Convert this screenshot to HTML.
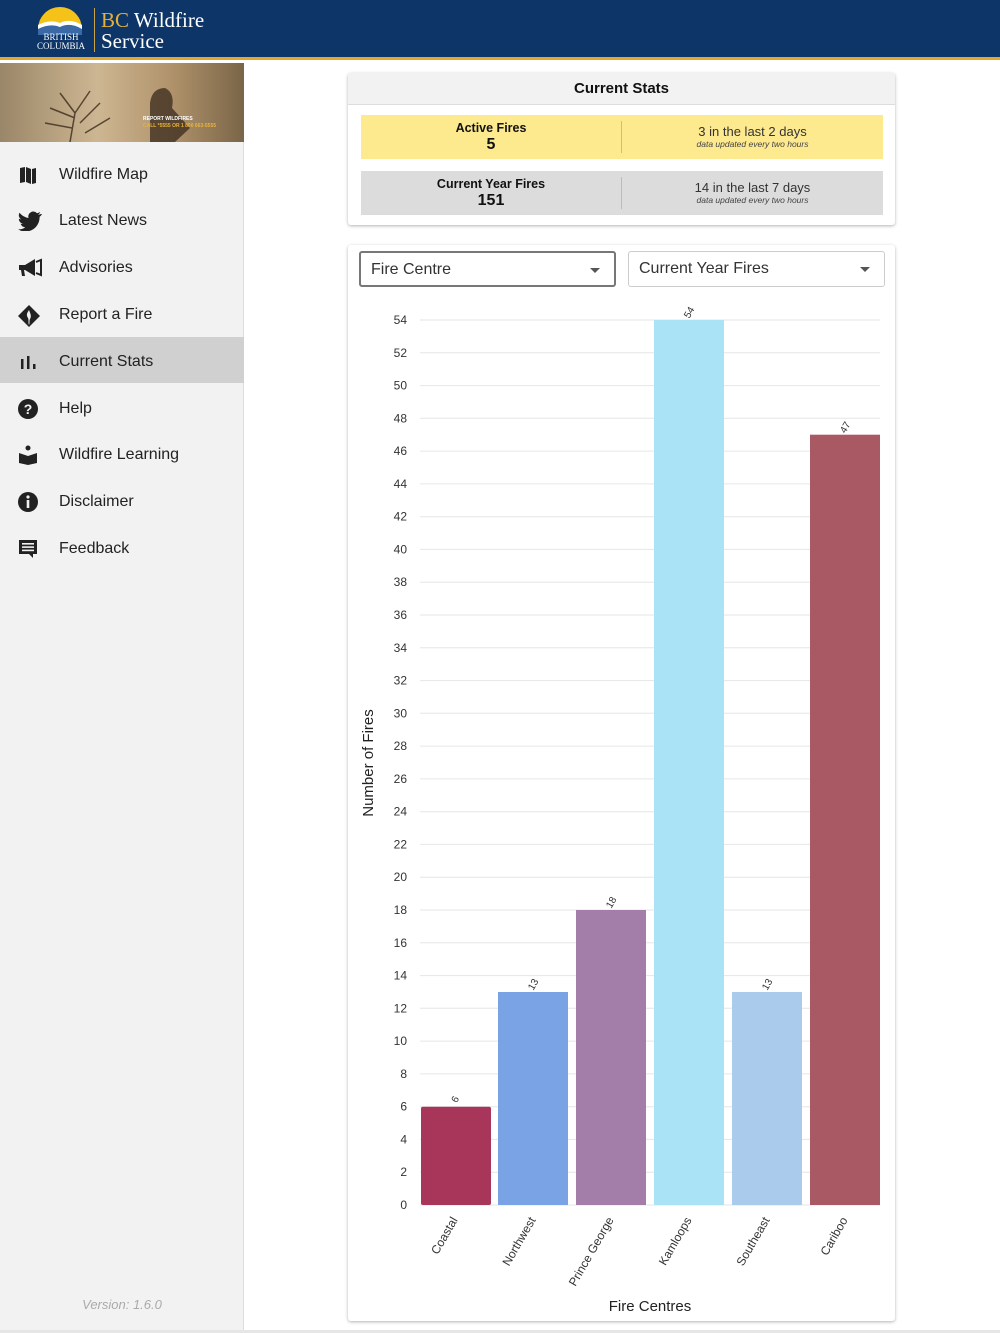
<!DOCTYPE html>
<html><head><meta charset="utf-8"><style>
*{margin:0;padding:0;box-sizing:border-box}
body{width:1000px;height:1333px;position:relative;background:#fff;font-family:"Liberation Sans",sans-serif;overflow:hidden}
.hdr{position:absolute;left:0;top:0;width:1000px;height:60px;background:#0d3568;border-bottom:3px solid #e3a82b}
.side{position:absolute;left:0;top:63px;width:244px;height:1270px;background:#f2f2f2;border-right:1px solid #ddd}
.photo{position:absolute;left:0;top:63px;width:244px;height:79px;background:linear-gradient(90deg,#9a8668,#cdb692 40%,#b0936b 70%,#7a6548);overflow:hidden}
.item{position:absolute;left:0;width:244px;height:46px;font-size:16px;color:#222;line-height:46px;padding-left:59px}
.item svg{position:absolute;left:18px;top:13px}
.sel{background:#d0d0d0}
.card{position:absolute;background:#fff;box-shadow:0 1px 3px rgba(0,0,0,.3);border-radius:3px}
.row{position:absolute;left:13px;width:522px;height:44px}
.row .l{position:absolute;left:0;width:260px;top:6px;text-align:center;font-weight:bold;font-size:12.5px;color:#111}
.row .l b{display:block;font-size:16px;margin-top:1px}
.row .r{position:absolute;left:261px;width:261px;top:9px;text-align:center;font-size:13px;color:#333}
.row .r i{display:block;font-size:8.5px;color:#444}
.row .div{position:absolute;left:260px;top:6px;height:32px;border-left:1px solid #bbb}
.sel2{position:absolute;height:36px;border:1px solid #ccc;border-radius:3px;font-size:16px;color:#333;line-height:34px;padding-left:10px}
.sel2:after{content:"";position:absolute;right:14px;top:15px;border:5px solid transparent;border-top-color:#555;border-bottom:0}
</style></head><body>
<div class="hdr">
<svg width="60" height="30" style="position:absolute;left:32px;top:5px" viewBox="0 0 60 30">
<path d="M6 24 A22 22 0 0 1 50 24Z" fill="#f5c21a"/>
<path d="M6 20 Q18 14 28 18 Q38 13 50 20 L50 28 L6 28Z" fill="#fff"/>
<path d="M6 24 Q18 18 28 22 Q38 17 50 24 L50 30 L6 30Z" fill="#3a69a6"/>
</svg>
<div style="position:absolute;left:34px;top:33px;color:#fff;font-family:'Liberation Serif',serif;font-size:9px;line-height:9px;text-align:center;width:54px">BRITISH<br>COLUMBIA</div>
<div style="position:absolute;left:94px;top:8px;height:44px;border-left:1px solid #c9a34a"></div>
<div style="position:absolute;left:101px;top:10px;font-family:'Liberation Serif',serif;font-size:21px;line-height:21px;color:#fff"><span style="color:#e3b13a">BC</span> Wildfire<br>Service</div>
</div>
<div class="side"></div>
<div class="photo">
<svg width="244" height="79" style="position:absolute;left:0;top:0">
<g stroke="#3a2a1c" stroke-width="1.5" fill="none" opacity=".8">
<path d="M70 79 L75 50 L60 30 M75 50 L90 28 M75 55 L50 45 M80 60 L100 40 M72 65 L45 60 M85 70 L110 55"/>
</g>
<path d="M150 40 Q152 25 165 25 Q175 30 172 45 L190 65 L175 79 L150 79 Z" fill="#3a2a1c" opacity=".75"/>
</svg>
<div style="position:absolute;left:143px;top:53px;font-size:5px;color:#fff;font-weight:bold">REPORT WILDFIRES</div>
<div style="position:absolute;left:143px;top:60px;font-size:5px;color:#e9b43a;font-weight:bold">CALL *5555 OR 1 800 663-5555</div>
</div>
<div class="item" style="top:152px"><svg width="20" height="20" viewBox="0 0 20 20"><path d="M2 3l5 -1v15l-5 1zM8 2l5 2v15l-5-2zM14 4l4-1v15l-4 1z" fill="#222"/></svg>Wildfire Map</div>
<div class="item" style="top:198px"><svg width="24" height="20" viewBox="0 0 24 20"><path d="M23 3c-1 .4-2 .6-3 .7 1-.6 2-1.6 2.2-2.7-1 .6-2 1-3.2 1.2A5 5 0 0 0 10.5 7 14 14 0 0 1 1.5 1.8a5 5 0 0 0 1.5 6.6 5 5 0 0 1-2.2-.6 5 5 0 0 0 4 4.9 5 5 0 0 1-2.2.1 5 5 0 0 0 4.6 3.4A10 10 0 0 1 0 18.3 14 14 0 0 0 7.5 20.5C16.6 20.5 21.6 13 21.6 6.4v-.6c1-.7 1.8-1.6 2.4-2.7z" fill="#222"/></svg>Latest News</div>
<div class="item" style="top:245px"><svg width="24" height="20" viewBox="0 0 24 20"><path d="M1 7h6l10-6v17l-10-6h-1l1 6h-3l-1-6h-2z" fill="#222"/><path d="M18 4l5-2v15l-5-2" fill="none" stroke="#222" stroke-width="2"/></svg>Advisories</div>
<div class="item" style="top:292px"><svg width="22" height="22" viewBox="0 0 22 22"><path d="M11 0l11 11-11 11L0 11z" fill="#222"/><path d="M11 5c-2 3-3 5-1 8 1 2 0 5 1 7 1-2 0-4 1-6 2-3 0-6-1-9z" fill="#f2f2f2"/></svg>Report a Fire</div>
<div class="item sel" style="top:337px;line-height:50px"><svg width="20" height="20" viewBox="0 0 20 20" style="top:15px"><rect x="3" y="7" width="2.5" height="10" fill="#222"/><rect x="9" y="4" width="2.5" height="13" fill="#222"/><rect x="15" y="12" width="2.5" height="5" fill="#222"/></svg>Current Stats</div>
<div class="item" style="top:386px"><svg width="20" height="20" viewBox="0 0 20 20"><circle cx="10" cy="10" r="10" fill="#222"/><text x="10" y="15" font-size="14" font-weight="bold" text-anchor="middle" fill="#f2f2f2" font-family="Liberation Sans">?</text></svg>Help</div>
<div class="item" style="top:432px"><svg width="20" height="20" viewBox="0 0 20 20"><circle cx="10" cy="3" r="2.5" fill="#222"/><path d="M1 8l9 3 9-3v10l-9 2-9-2z" fill="#222"/></svg>Wildfire Learning</div>
<div class="item" style="top:479px"><svg width="20" height="20" viewBox="0 0 20 20"><circle cx="10" cy="10" r="10" fill="#222"/><rect x="8.7" y="8" width="2.6" height="8" fill="#f2f2f2"/><circle cx="10" cy="5" r="1.6" fill="#f2f2f2"/></svg>Disclaimer</div>
<div class="item" style="top:526px"><svg width="20" height="20" viewBox="0 0 20 20"><path d="M1 1h18v14h-4v4l-4-4H1z" fill="#222"/><rect x="4" y="4" width="12" height="1.6" fill="#f2f2f2"/><rect x="4" y="7.3" width="12" height="1.6" fill="#f2f2f2"/><rect x="4" y="10.6" width="12" height="1.6" fill="#f2f2f2"/></svg>Feedback</div>
<div style="position:absolute;left:0;width:244px;top:1297px;text-align:center;font-size:13px;font-style:italic;color:#aaa">Version: 1.6.0</div>
<div style="position:absolute;left:0;top:1330px;width:1000px;height:3px;background:#e6e6e6"></div>

<div class="card" style="left:348px;top:73px;width:547px;height:152px">
<div style="height:32px;background:#f2f2f2;border-bottom:1px solid #ddd;text-align:center;line-height:32px;font-weight:bold;font-size:15px;color:#111">Current Stats</div>
<div class="row" style="top:42px;background:#fde98e"><div class="l">Active Fires<b>5</b></div><div class="div"></div><div class="r">3 in the last 2 days<i>data updated every two hours</i></div></div>
<div class="row" style="top:98px;background:#dcdcdc"><div class="l">Current Year Fires<b>151</b></div><div class="div"></div><div class="r">14 in the last 7 days<i>data updated every two hours</i></div></div>
</div>
<div class="card" style="left:348px;top:245px;width:547px;height:1076px"></div>
<div class="sel2" style="left:359px;top:251px;width:257px;border:2px solid #777">Fire Centre</div>
<div class="sel2" style="left:628px;top:251px;width:257px">Current Year Fires</div>

<svg width="1000" height="1333" style="position:absolute;left:0;top:0" font-family="Liberation Sans" >
<g stroke="#e6e6e6" stroke-width="1">
<line x1="420" x2="880" y1="1205" y2="1205"/><line x1="420" x2="880" y1="1172.2" y2="1172.2"/><line x1="420" x2="880" y1="1139.4" y2="1139.4"/><line x1="420" x2="880" y1="1106.7" y2="1106.7"/><line x1="420" x2="880" y1="1073.9" y2="1073.9"/><line x1="420" x2="880" y1="1041.1" y2="1041.1"/><line x1="420" x2="880" y1="1008.3" y2="1008.3"/><line x1="420" x2="880" y1="975.6" y2="975.6"/><line x1="420" x2="880" y1="942.8" y2="942.8"/><line x1="420" x2="880" y1="910" y2="910"/><line x1="420" x2="880" y1="877.2" y2="877.2"/><line x1="420" x2="880" y1="844.4" y2="844.4"/><line x1="420" x2="880" y1="811.7" y2="811.7"/><line x1="420" x2="880" y1="778.9" y2="778.9"/><line x1="420" x2="880" y1="746.1" y2="746.1"/><line x1="420" x2="880" y1="713.3" y2="713.3"/><line x1="420" x2="880" y1="680.6" y2="680.6"/><line x1="420" x2="880" y1="647.8" y2="647.8"/><line x1="420" x2="880" y1="615" y2="615"/><line x1="420" x2="880" y1="582.2" y2="582.2"/><line x1="420" x2="880" y1="549.4" y2="549.4"/><line x1="420" x2="880" y1="516.7" y2="516.7"/><line x1="420" x2="880" y1="483.9" y2="483.9"/><line x1="420" x2="880" y1="451.1" y2="451.1"/><line x1="420" x2="880" y1="418.3" y2="418.3"/><line x1="420" x2="880" y1="385.6" y2="385.6"/><line x1="420" x2="880" y1="352.8" y2="352.8"/><line x1="420" x2="880" y1="320" y2="320"/>
</g>
<g font-size="12" fill="#333" text-anchor="end">
<text x="407" y="1209">0</text><text x="407" y="1176.2">2</text><text x="407" y="1143.4">4</text><text x="407" y="1110.7">6</text><text x="407" y="1077.9">8</text><text x="407" y="1045.1">10</text><text x="407" y="1012.3">12</text><text x="407" y="979.6">14</text><text x="407" y="946.8">16</text><text x="407" y="914">18</text><text x="407" y="881.2">20</text><text x="407" y="848.4">22</text><text x="407" y="815.7">24</text><text x="407" y="782.9">26</text><text x="407" y="750.1">28</text><text x="407" y="717.3">30</text><text x="407" y="684.6">32</text><text x="407" y="651.8">34</text><text x="407" y="619">36</text><text x="407" y="586.2">38</text><text x="407" y="553.4">40</text><text x="407" y="520.7">42</text><text x="407" y="487.9">44</text><text x="407" y="455.1">46</text><text x="407" y="422.3">48</text><text x="407" y="389.6">50</text><text x="407" y="356.8">52</text><text x="407" y="324">54</text>
</g>
<rect x="421" y="1106.7" width="70" height="98.3" rx="2" fill="#a8365a"/>
<rect x="498" y="992" width="70" height="213" fill="#7aa3e5"/>
<rect x="576" y="910" width="70" height="295" fill="#a27ea8"/>
<rect x="654" y="320" width="70" height="885" fill="#aae3f5"/>
<rect x="732" y="992" width="70" height="213" fill="#abcbec"/>
<rect x="810" y="434.7" width="70" height="770.3" fill="#a95963"/>
<g font-size="10" fill="#333" text-anchor="middle">
<text transform="translate(458,1101) rotate(-60)">6</text>
<text transform="translate(536,986) rotate(-60)">13</text>
<text transform="translate(614,904) rotate(-60)">18</text>
<text transform="translate(692,314) rotate(-60)">54</text>
<text transform="translate(770,986) rotate(-60)">13</text>
<text transform="translate(848,429) rotate(-60)">47</text>
</g>
<g font-size="12" fill="#333" text-anchor="end">
<text transform="translate(458,1220) rotate(-60)">Coastal</text>
<text transform="translate(536,1220) rotate(-60)">Northwest</text>
<text transform="translate(614,1220) rotate(-60)">Prince George</text>
<text transform="translate(692,1220) rotate(-60)">Kamloops</text>
<text transform="translate(770,1220) rotate(-60)">Southeast</text>
<text transform="translate(848,1220) rotate(-60)">Cariboo</text>
</g>
<text x="650" y="1311" font-size="15" fill="#222" text-anchor="middle">Fire Centres</text>
<text transform="translate(373,763) rotate(-90)" font-size="15" fill="#222" text-anchor="middle">Number of Fires</text>
</svg>
</body></html>
